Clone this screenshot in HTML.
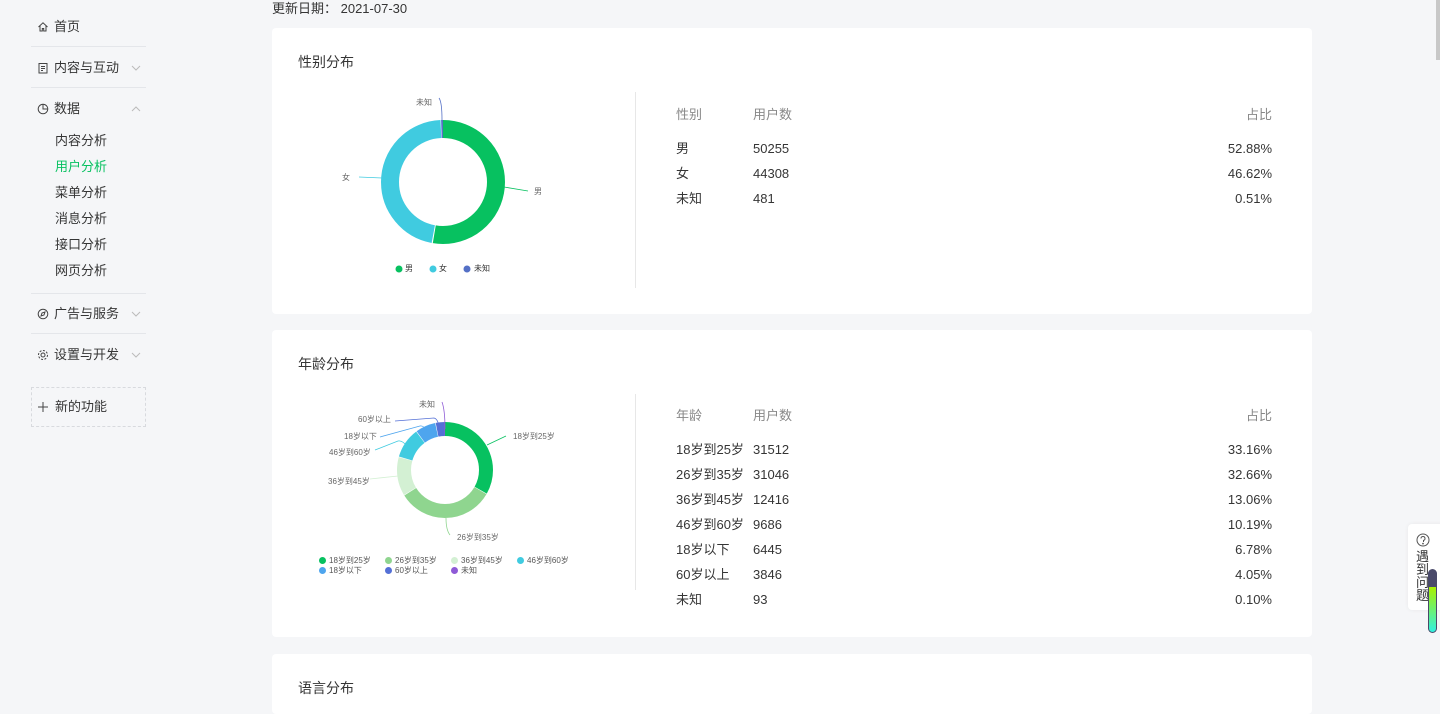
<!DOCTYPE html>
<html><head><meta charset="utf-8"><style>
*{margin:0;padding:0;box-sizing:border-box}
body{width:1440px;height:689px;overflow:hidden;background:#f5f6f8;font-family:"Liberation Sans","Noto Sans CJK SC",sans-serif;color:#353535;position:relative;font-size:13px;line-height:18px}
.abs{position:absolute}
.item{position:absolute;left:31px;width:115px;height:18px;font-size:13px;color:#353535}
.item .ic{position:absolute;left:6px;top:3px}
.item .t{position:absolute;left:23px;top:0}
.chev{position:absolute;left:100px;top:5px}
.hr{position:absolute;left:31px;width:115px;height:1px;background:#e4e6ea}
.sub{position:absolute;left:55px;font-size:13px;color:#353535}
.card{position:absolute;left:272px;width:1040px;background:#fff;border-radius:4px}
.title{position:absolute;left:26px;font-size:14px;color:#353535}
.vline{position:absolute;left:363px;width:1px;background:#e7e7e7}
.th{position:absolute;color:#888;font-size:13px}
.td{position:absolute;font-size:13px;color:#353535}
.r{text-align:right;width:80px}
.lbl{position:absolute;font-size:8px;line-height:10px;color:#666;white-space:nowrap}
.lg{position:absolute;font-size:8px;line-height:10px;color:#555;white-space:nowrap}
.lg i{display:inline-block;width:7px;height:7px;border-radius:50%;margin-right:3px;vertical-align:-1px}
</style></head><body>
<div class="abs" style="left:272px;top:0px;font-size:13px">更新日期： 2021-07-30</div>

<div class="item" style="top:18px"><svg class="ic" width="12" height="12" viewBox="0 0 12 12" fill="none" stroke="#444"><path d="M1.5 6 6 1.8 10.5 6M3 5v5h2.3V7.5h1.4V10H9V5"/></svg><span class="t">首页</span></div>
<div class="hr" style="top:46px"></div>
<div class="item" style="top:59px"><svg class="ic" width="12" height="12" viewBox="0 0 12 12" fill="none" stroke="#444"><rect x="2" y="1.5" width="8" height="9.5"/><path d="M4 4.5h4M4 6.5h4M4 8.5h2"/></svg><span class="t">内容与互动</span><svg class="chev" width="10" height="8" viewBox="0 0 10 8" fill="none" stroke="#bbb"><path d="M1 2l4 4 4-4"/></svg></div>
<div class="hr" style="top:87px"></div>
<div class="item" style="top:100px"><svg class="ic" width="12" height="12" viewBox="0 0 12 12" fill="none" stroke="#444"><circle cx="6" cy="6" r="4.8"/><path d="M6 1.2V6h4.8"/></svg><span class="t">数据</span><svg class="chev" width="10" height="8" viewBox="0 0 10 8" fill="none" stroke="#bbb"><path d="M1 6l4-4 4 4"/></svg></div>
<div class="sub" style="top:132px">内容分析</div>
<div class="sub" style="top:158px;color:#07c160">用户分析</div>
<div class="sub" style="top:184px">菜单分析</div>
<div class="sub" style="top:210px">消息分析</div>
<div class="sub" style="top:236px">接口分析</div>
<div class="sub" style="top:262px">网页分析</div>
<div class="hr" style="top:293px"></div>
<div class="item" style="top:305px"><svg class="ic" width="12" height="12" viewBox="0 0 12 12" fill="none" stroke="#444"><circle cx="6" cy="6" r="4.8"/><path d="M8 4 5 5 4 8 7 7z"/></svg><span class="t">广告与服务</span><svg class="chev" width="10" height="8" viewBox="0 0 10 8" fill="none" stroke="#bbb"><path d="M1 2l4 4 4-4"/></svg></div>
<div class="hr" style="top:333px"></div>
<div class="item" style="top:346px"><svg class="ic" width="12" height="12" viewBox="0 0 12 12" fill="none" stroke="#444"><circle cx="6" cy="6" r="2"/><circle cx="6" cy="6" r="4.5" stroke-dasharray="2 1.5"/></svg><span class="t">设置与开发</span><svg class="chev" width="10" height="8" viewBox="0 0 10 8" fill="none" stroke="#bbb"><path d="M1 2l4 4 4-4"/></svg></div>
<div class="abs" style="left:31px;top:387px;width:115px;height:40px;border:1px dashed #d8dade"></div>
<svg class="abs" style="left:37px;top:401px" width="12" height="12" viewBox="0 0 12 12" stroke="#444"><path d="M6 1v10M1 6h10"/></svg>
<div class="abs" style="left:55px;top:398px">新的功能</div>

<div class="card" style="top:28px;height:286px">
<div class="title" style="top:25px">性别分布</div>
<div class="vline" style="top:64px;height:196px"></div>
<div class="th" style="left:404px;top:78px">性别</div><div class="th" style="left:481px;top:78px">用户数</div><div class="th r" style="left:920px;top:78px">占比</div>
<div class="td" style="left:404px;top:112px">男</div><div class="td" style="left:481px;top:112px">50255</div><div class="td r" style="left:920px;top:112px">52.88%</div>
<div class="td" style="left:404px;top:137px">女</div><div class="td" style="left:481px;top:137px">44308</div><div class="td r" style="left:920px;top:137px">46.62%</div>
<div class="td" style="left:404px;top:162px">未知</div><div class="td" style="left:481px;top:162px">481</div><div class="td r" style="left:920px;top:162px">0.51%</div>
</div>
<svg class="abs" style="left:330px;top:90px" width="230" height="190">
<g transform="rotate(-90 113 92)" fill="none" stroke-width="18">
<circle cx="113" cy="92" r="53" stroke="#07c160" stroke-dasharray="175.1 400"/>
<circle cx="113" cy="92" r="53" stroke="#40cbe0" stroke-dasharray="154.4 400" stroke-dashoffset="-176.1"/>
<circle cx="113" cy="92" r="53" stroke="#5470c6" stroke-dasharray="1.7 400" stroke-dashoffset="-331"/>
</g>
<path d="M174 97 198 101" stroke="#07c160" fill="none" stroke-width=".8"/>
<path d="M52 88 29 87" stroke="#40cbe0" fill="none" stroke-width=".8"/>
<path d="M112 30Q112 12 109 8" stroke="#5470c6" fill="none" stroke-width=".8"/>
<circle cx="69" cy="179" r="3.5" fill="#07c160"/><circle cx="103" cy="179" r="3.5" fill="#40cbe0"/><circle cx="137" cy="179" r="3.5" fill="#5470c6"/>
</svg>
<div class="lbl" style="left:534px;top:187px">男</div>
<div class="lbl" style="left:342px;top:173px">女</div>
<div class="lbl" style="left:416px;top:98px">未知</div>
<div class="lbl" style="left:405px;top:264px;color:#333">男</div>
<div class="lbl" style="left:439px;top:264px;color:#333">女</div>
<div class="lbl" style="left:474px;top:264px;color:#333">未知</div>

<div class="card" style="top:330px;height:307px">
<div class="title" style="top:25px">年龄分布</div>
<div class="vline" style="top:64px;height:196px"></div>
<div class="th" style="left:404px;top:77px">年龄</div><div class="th" style="left:481px;top:77px">用户数</div><div class="th r" style="left:920px;top:77px">占比</div>
<div class="td" style="left:404px;top:111px">18岁到25岁</div><div class="td" style="left:481px;top:111px">31512</div><div class="td r" style="left:920px;top:111px">33.16%</div>
<div class="td" style="left:404px;top:136px">26岁到35岁</div><div class="td" style="left:481px;top:136px">31046</div><div class="td r" style="left:920px;top:136px">32.66%</div>
<div class="td" style="left:404px;top:161px">36岁到45岁</div><div class="td" style="left:481px;top:161px">12416</div><div class="td r" style="left:920px;top:161px">13.06%</div>
<div class="td" style="left:404px;top:186px">46岁到60岁</div><div class="td" style="left:481px;top:186px">9686</div><div class="td r" style="left:920px;top:186px">10.19%</div>
<div class="td" style="left:404px;top:211px">18岁以下</div><div class="td" style="left:481px;top:211px">6445</div><div class="td r" style="left:920px;top:211px">6.78%</div>
<div class="td" style="left:404px;top:236px">60岁以上</div><div class="td" style="left:481px;top:236px">3846</div><div class="td r" style="left:920px;top:236px">4.05%</div>
<div class="td" style="left:404px;top:261px">未知</div><div class="td" style="left:481px;top:261px">93</div><div class="td r" style="left:920px;top:261px">0.10%</div>
</div>
<svg class="abs" style="left:330px;top:390px" width="260" height="160">
<g transform="rotate(-90 115 80)" fill="none" stroke-width="14">
<circle cx="115" cy="80" r="41" stroke="#07c160" stroke-dasharray="85.4 400"/>
<circle cx="115" cy="80" r="41" stroke="#8fd58f" stroke-dasharray="84.1 400" stroke-dashoffset="-85.9"/>
<circle cx="115" cy="80" r="41" stroke="#d3f0d3" stroke-dasharray="33.6 400" stroke-dashoffset="-170.5"/>
<circle cx="115" cy="80" r="41" stroke="#40cbe0" stroke-dasharray="26.2 400" stroke-dashoffset="-204.6"/>
<circle cx="115" cy="80" r="41" stroke="#4ea5ee" stroke-dasharray="17.4 400" stroke-dashoffset="-231.3"/>
<circle cx="115" cy="80" r="41" stroke="#5470d6" stroke-dasharray="10.4 400" stroke-dashoffset="-249.2"/>
<circle cx="115" cy="80" r="41" stroke="#8e5ad6" stroke-dasharray=".6 400" stroke-dashoffset="-256.6"/>
</g>
<g fill="none" stroke-width=".8">
<path d="M157 55 176 46" stroke="#07c160"/>
<path d="M116 128Q116 140 120 145" stroke="#8fd58f"/>
<path d="M68 86 40 89" stroke="#d3f0d3"/>
<path d="M77 56Q72 50 68 51L45 60" stroke="#40cbe0"/>
<path d="M98 43Q94 35 90 36L50 47" stroke="#4ea5ee"/>
<path d="M109 37Q108 29 104 28L65 31" stroke="#5470d6"/>
<path d="M115 39Q115 20 112 12" stroke="#8e5ad6"/>
</g>
</svg>
<div class="lbl" style="left:513px;top:432px">18岁到25岁</div>
<div class="lbl" style="left:457px;top:533px">26岁到35岁</div>
<div class="lbl" style="left:328px;top:477px">36岁到45岁</div>
<div class="lbl" style="left:329px;top:448px">46岁到60岁</div>
<div class="lbl" style="left:344px;top:432px">18岁以下</div>
<div class="lbl" style="left:358px;top:415px">60岁以上</div>
<div class="lbl" style="left:419px;top:400px">未知</div>
<div class="lg" style="left:319px;top:556px"><i style="background:#07c160"></i>18岁到25岁</div>
<div class="lg" style="left:385px;top:556px"><i style="background:#8fd58f"></i>26岁到35岁</div>
<div class="lg" style="left:451px;top:556px"><i style="background:#d3f0d3"></i>36岁到45岁</div>
<div class="lg" style="left:517px;top:556px"><i style="background:#40cbe0"></i>46岁到60岁</div>
<div class="lg" style="left:319px;top:566px"><i style="background:#4ea5ee"></i>18岁以下</div>
<div class="lg" style="left:385px;top:566px"><i style="background:#5470d6"></i>60岁以上</div>
<div class="lg" style="left:451px;top:566px"><i style="background:#8e5ad6"></i>未知</div>

<div class="card" style="top:654px;height:60px">
<div class="title" style="top:25px">语言分布</div>
</div>

<div class="abs" style="left:1408px;top:524px;width:40px;height:86px;background:#fff;border-radius:4px;box-shadow:0 0 4px rgba(0,0,0,.06)"></div>
<svg class="abs" style="left:1416px;top:533px" width="14" height="14" viewBox="0 0 14 14" fill="none" stroke="#555"><circle cx="7" cy="7" r="6"/><path d="M5 5.5a2 2 0 1 1 2.5 1.9V9"/><circle cx="7" cy="10.6" r=".4" fill="#555"/></svg>
<div class="abs" style="left:1416px;top:550px;width:14px;font-size:13px;line-height:13px;color:#353535">遇到问题</div>
<div class="abs" style="left:1428px;top:569px;width:9px;height:64px;border-radius:5px;background:#4a4a6a"></div>
<div class="abs" style="left:1429px;top:587px;width:7px;height:45px;border-radius:0 0 4px 4px;background:linear-gradient(#a8f000,#30f0e0)"></div>
<div class="abs" style="left:1436px;top:0;width:4px;height:60px;background:#c8c8c8"></div>
</body></html>
